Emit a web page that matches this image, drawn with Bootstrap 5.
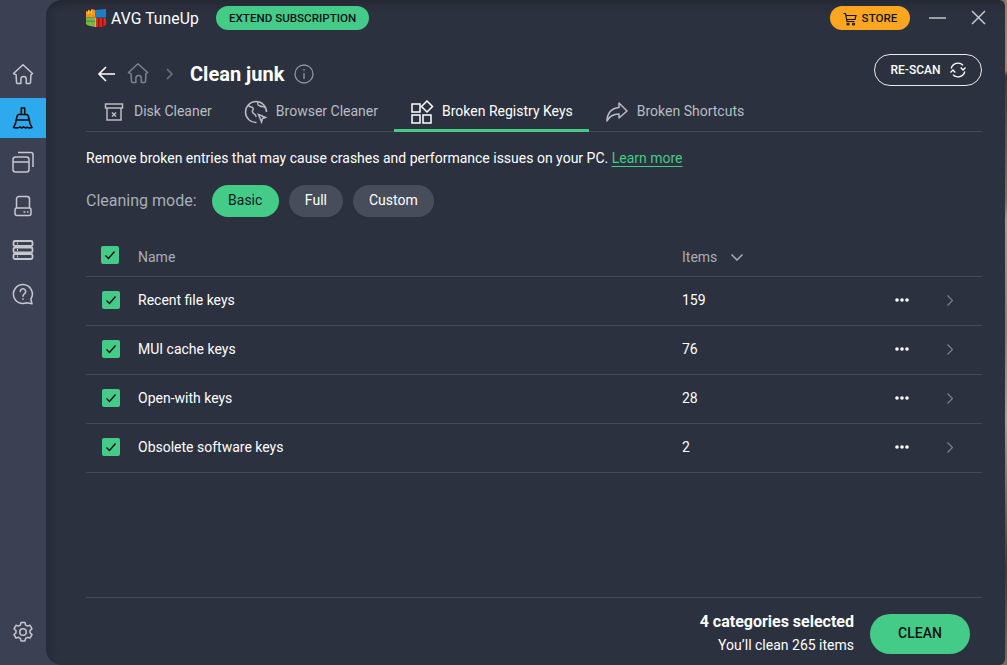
<!DOCTYPE html>
<html lang="en">
<head>
<meta charset="utf-8">
<title>AVG TuneUp</title>
<link href="https://cdn.jsdelivr.net/npm/bootstrap@5.3.0/dist/css/bootstrap.min.css" rel="stylesheet">
<style>
html,body{height:100%;margin:0;overflow:hidden}
body{background:#3b4152;font-family:Roboto,"Liberation Sans",sans-serif;color:#fff;font-size:14px}
.shell{width:1007px;height:665px;background:linear-gradient(90deg,#3b4152 0,#3b4152 1000px,#7b6a5e 1000px)}
.strip{width:2px;flex:none;background:linear-gradient(180deg,#9a7b6c 0,#a08272 70px,#3b3d34 76px,#6d7466 200px,#9aa08e 220px,#7d8474 330px,#a1a594 420px,#5a5f50 520px,#3a3c33 570px,#6f7060 665px)}
.rail{width:46px;flex:none;padding-top:54px}
.rail-btn{height:40px;width:46px;margin-bottom:4px;color:#c5c8cf}
.rail-btn svg{width:22px;height:22px}
.rail-btn.on{background:#2daaee;color:#0a0c12}
.rail-foot{margin-top:auto;margin-bottom:13px}
.panel{flex:1;min-width:0;height:665px;background:linear-gradient(180deg,#252a36 0,#2b313f 14px);border-radius:16px 6px 6px 16px;box-shadow:inset 7px 0 8px -6px rgba(18,22,30,.35);padding:0 23px 0 40px}
.topbar{height:35px;padding-top:6px}
.logo{width:20px;height:18px;margin:3px 5px 0 0}
.brand{font-size:15.7px;font-weight:400;letter-spacing:.1px;height:26px}
.pill-extend{height:24px;background:#44cb87;color:#0d1117;border-radius:12px;font-size:11.6px;font-weight:500;padding:1px 13px 0;margin-left:17px;border:0}
.pill-store{height:24px;width:80px;background:#fea61f;color:#12141a;border-radius:12px;font-size:11.6px;font-weight:500;border:0;gap:5px;padding:1px 0 0}
.win-group{gap:19px;margin-right:-6px}
.win{width:18px;height:18px;color:#c5c8cf}
.crumb{height:57px;padding-top:27px}
.crumb h1{font-size:20px;font-weight:700;margin:0;line-height:1;height:24px}
.ic-back{margin:3px 11px 0 11px}
.ic-home{margin:0 17px 0 0;color:#7d828e}
.ic-chev{margin:6px 16px 0 0}
.ic-info{margin:2px 0 0 10px}
.rescan{height:32px;width:108px;border:1px solid #e9eaee;border-radius:16px;background:transparent;color:#fff;font-size:12px;font-weight:500;gap:9px;padding:0 0 0 2px;margin-top:-8px}
.tabs{height:40px;border-bottom:1px solid #454a59}
.tab-i{height:40px;padding:2px 16px 0;color:#b9bcc4;font-size:14px;gap:8px;margin-bottom:-1px;border-bottom:3px solid transparent}
.tab-i svg{width:24px;height:24px}
.tab-i.on{color:#fff;border-bottom-color:#44cb87}
.intro{margin:18px 0 0;font-size:14px;line-height:16px}
.learn{color:#44cb87;text-decoration:underline;text-underline-offset:3px}
.mode{margin-top:19px;height:32px;gap:10px;color:#a9adb6;font-size:16px}
.mode-label{margin-right:5px}
.chip{height:32px;border-radius:16px;background:#484d5b;color:#fff;font-size:14px;border:0;padding:0 16px 2px}
.chip.on{background:#44cb87;color:#12161d;padding:0 16.5px 2px}
.grid-wrap{margin-top:20px}
.t-row{height:49px;border-bottom:1px solid #454a59;font-size:14px;padding-bottom:2px}
.t-head{height:40px;color:#a9adb6;padding-bottom:0}
.c-check{width:52px;padding-left:16px;flex:none}
.c-name{width:544px;flex:none}
.c-items{width:213px;flex:none}
.c-more{width:52px;flex:none;line-height:0}
.t-head .c-check{padding-left:15px;margin-bottom:3px}
.t-head .c-name,.t-head .c-items{padding-top:2px}
.tick{width:18px;height:18px;background:#44cb87;border-radius:2px}
.tick svg{width:12px;height:12px}
.ic-sort{margin-left:14px}
.spacer{flex:1}
.foot{height:68px;border-top:1px solid #454a59;padding:4px 12px 0 0;gap:16px}
.foot-text{text-align:right;line-height:24px;font-size:14px}
.foot-text b{font-size:16px;font-weight:700;display:block;margin-bottom:-1px}
.clean{width:100px;height:40px;border:0;border-radius:20px;background:#44cb87;color:#0d1117;font-size:14px;font-weight:500;padding:0}
</style>
</head>
<body>
<div class="shell d-flex">
  <nav class="rail d-flex flex-column">
    <div class="rail-btn d-flex align-items-center justify-content-center">
      <svg viewBox="0 0 22 22" fill="none" stroke="currentColor" stroke-width="1.5" stroke-linejoin="round"><path d="M1.5 10.5 11 1.8l9.5 8.7-1.600 1.400-.4 7.600a1 1 0 0 1-1 1h-3.200v-4.400a2.700 2.700 0 0 0-5.400 0v4.400H5.500a1 1 0 0 1-1-1l-.4-7.600z"/></svg>
    </div>
    <div class="rail-btn on d-flex align-items-center justify-content-center">
      <svg viewBox="0 0 22 22" fill="none" stroke="currentColor" stroke-width="1.6" stroke-linejoin="round"><path d="M9.300 1h3.400v6.500H9.300zM7 7.500h8c1 .6 1.500 1.500 1.700 3L18 16.500l2 4c-1.600.5-3.500.5-5-.4l-1 .8-2.500-.9-1.500.9-2-.9-1 .5c-1.800.5-3.800.5-5.500 0l2-4.100 1.300-6c.2-1.500.7-2.400 1.700-2.900z"/><path d="M4.800 13h12.400"/></svg>
    </div>
    <div class="rail-btn d-flex align-items-center justify-content-center">
      <svg viewBox="0 0 22 22" fill="none" stroke="currentColor" stroke-width="1.5" stroke-linejoin="round"><rect x="1" y="6" width="16" height="15" rx="2.500"/><path d="M1 11h16M6 1.500h13a2 2 0 0 1 2 2v12.500"/></svg>
    </div>
    <div class="rail-btn d-flex align-items-center justify-content-center">
      <svg viewBox="0 0 22 22" fill="none" stroke="currentColor" stroke-width="1.5" stroke-linejoin="round"><path d="M4.500 13V4a2.500 2.500 0 0 1 2.500-2.500h8A2.500 2.500 0 0 1 17.500 4v9"/><rect x="3" y="13" width="16" height="7.500" rx="2"/><path d="M11.500 17h2M15 17h1.500"/></svg>
    </div>
    <div class="rail-btn d-flex align-items-center justify-content-center">
      <svg viewBox="0 0 22 22" fill="none" stroke="currentColor" stroke-width="1.8"><rect x="1.500" y="2" width="19" height="5" rx="1.500"/><rect x="1.500" y="8.500" width="19" height="5" rx="1.500"/><rect x="1.500" y="15" width="19" height="5" rx="1.500"/><path d="M5 4.500h1M5 11h1M5 17.500h1"/></svg>
    </div>
    <div class="rail-btn d-flex align-items-center justify-content-center">
      <svg viewBox="0 0 22 22" fill="none" stroke="currentColor" stroke-width="1.5" stroke-linejoin="round"><path d="M11 1.500a9.500 9.500 0 1 0 3.500 18.300l5.500 1-1.200-4.600A9.500 9.500 0 0 0 11 1.500z"/><path d="M8.300 8.500a2.700 2.700 0 1 1 4.300 2.200c-1 .7-1.600 1.200-1.600 2.500" stroke-linecap="round"/><path d="M11 15.300v1.400"/></svg>
    </div>
    <div class="rail-foot rail-btn d-flex align-items-center justify-content-center">
      <svg viewBox="0 0 22 22" fill="none" stroke="currentColor" stroke-width="1.5" stroke-linejoin="round"><circle cx="11" cy="11" r="3.300"/><path d="M9 1.500h4l.6 2.600 1.900 1 2.500-.8 2 3.500-2 1.800v2.200l2 1.800-2 3.500-2.500-.8-1.900 1-.6 2.600H9l-.6-2.600-1.900-1-2.500.8-2-3.500 2-1.800V9.600l-2-1.800 2-3.500 2.500.8 1.900-1z"/></svg>
    </div>
  </nav>
  <main class="panel d-flex flex-column">
    <header class="topbar d-flex align-items-start">
      <svg class="logo" viewBox="0 0 20 18"><path fill="#f7941e" d="M0 1.500 1.500 3 3 .5 4.500 2.500 6 0l3 1v7.500H0z"/><path fill="#fbd024" d="M1.500 3 3 .5v4H1.500zM4.500 2.500 6 0v4.500H4.500z"/><path fill="#1e7fc4" d="M9 1l11-1v8.500H9z"/><path fill="#7ab648" d="M0 8.500h9V18l-7-1.500L0 15z"/><path fill="#4f9a3c" d="M0 11.500h9V13H0z"/><path fill="#e0271f" d="M10 9h10v7l-4 2h-6z"/><path fill="#8e1512" d="M12 9h1.500v9H12zM16 9h1.500v8.500H16z"/><path fill="#f0b429" d="M9 8.500h1V18H9z"/></svg>
      <span class="brand d-flex align-items-center">AVG TuneUp</span>
      <button class="pill-extend d-flex align-items-center">EXTEND SUBSCRIPTION</button>
      <div class="win-group ms-auto d-flex align-items-center">
        <button class="pill-store d-flex align-items-center justify-content-center">
          <svg width="14" height="14" viewBox="0 0 14 14" fill="none" stroke="currentColor" stroke-width="1.200"><path d="M.5 1.500h2l1.500 8h7.500M3 3.500h10l-1 4H3.800"/><circle cx="5" cy="12" r="1"/><circle cx="10.500" cy="12" r="1"/></svg>STORE</button>
        <svg class="win" viewBox="0 0 18 18" fill="none" stroke="currentColor" stroke-width="1.500"><path d="M0 9h17"/></svg>
        <svg class="win ms-1" viewBox="0 0 18 18" fill="none" stroke="currentColor" stroke-width="1.500"><path d="M2 2l13 13M15 2 2 15"/></svg>
      </div>
    </header>
    <section class="crumb d-flex align-items-start">
      <svg class="ic-back" width="19" height="18" viewBox="0 0 19 18" fill="none" stroke="#fff" stroke-width="1.600"><path d="M18 9H2M9 2 2 9l7 7"/></svg>
      <svg class="ic-home" width="22" height="22" viewBox="0 0 22 22" fill="none" stroke="currentColor" stroke-width="1.500" stroke-linejoin="round"><path d="M1.500 10.500 11 1.800l9.500 8.700-1.600 1.400-.4 7.600a1 1 0 0 1-1 1h-3.200v-4.400a2.700 2.700 0 0 0-5.400 0v4.400H5.500a1 1 0 0 1-1-1l-.4-7.600z"/></svg>
      <svg class="ic-chev" width="8" height="12" viewBox="0 0 8 12" fill="none" stroke="#6f7480" stroke-width="1.500"><path d="M1 1l5 5-5 5"/></svg>
      <h1 class="d-flex align-items-center">Clean junk</h1>
      <svg class="ic-info" width="20" height="20" viewBox="0 0 20 20" fill="none" stroke="#8f94a0" stroke-width="1.300"><circle cx="10" cy="10" r="9"/><path d="M10 9v6M10 5v1.800"/></svg>
      <button class="rescan ms-auto d-flex align-items-center justify-content-center">RE-SCAN
        <svg width="18" height="18" viewBox="0 0 18 18" fill="none" stroke="currentColor" stroke-width="1.300"><path d="M2.200 7.500A7 7 0 0 1 14 4.200M15.800 10.500A7 7 0 0 1 4 13.800"/><path d="M16.500 6.500 14 9 11.700 6.500M1.500 11.500 4 9l2.300 2.500"/></svg></button>
    </section>
    <div class="tabs d-flex">
      <div class="tab-i d-flex align-items-center">
        <svg viewBox="0 0 24 24" fill="none" stroke="currentColor" stroke-width="1.500"><path d="M3.500 4h17v4h-17zM5 8v12h14V8"/><path d="M10 12.500l4 4M14 12.500l-4 4"/></svg>Disk Cleaner</div>
      <div class="tab-i d-flex align-items-center">
        <svg viewBox="0 0 24 24" fill="none" stroke="currentColor" stroke-width="1.500"><path d="M12.500 22.500A10.500 10.500 0 1 1 22.500 12"/><path d="M4 5c2 3 4 1 5 3s-2 3 0 5 3 1 3 4M14 2c-1 3 0 3 2 4s4 0 5 2"/><path d="M14.500 14.500l7 3-3 1-1 3.500z"/></svg>Browser Cleaner</div>
      <div class="tab-i on d-flex align-items-center">
        <svg viewBox="0 0 24 24" fill="none" stroke="currentColor" stroke-width="1.500"><rect x="2" y="4" width="8" height="8"/><rect x="2" y="15" width="8" height="8"/><rect x="13" y="15" width="8" height="8"/><path d="M17 1l5.500 5.500L17 12l-5.500-5.500z"/></svg>Broken Registry Keys</div>
      <div class="tab-i d-flex align-items-center">
        <svg viewBox="0 0 24 24" fill="none" stroke="currentColor" stroke-width="1.500" stroke-linejoin="round"><path d="M14 3l8 8-8 7v-4C8 14 4.500 16 2 21c0-7 4-13 12-13.500z"/></svg>Broken Shortcuts</div>
    </div>
    <p class="intro">Remove broken entries that may cause crashes and performance issues on your PC. <a href="#" class="learn">Learn more</a></p>
    <div class="mode d-flex align-items-center">
      <span class="mode-label">Cleaning mode:</span>
      <button class="chip on">Basic</button>
      <button class="chip">Full</button>
      <button class="chip">Custom</button>
    </div>
    <div class="grid-wrap">
      <div class="t-row t-head d-flex align-items-center">
        <div class="c-check"><div class="tick d-flex align-items-center justify-content-center"><svg viewBox="0 0 12 12" fill="none" stroke="#0d1117" stroke-width="1.400"><path d="M1.500 6.500l3 3 6-7"/></svg></div></div>
        <div class="c-name">Name</div>
        <div class="c-items d-flex align-items-center">Items<svg class="ic-sort" width="12" height="7" viewBox="0 0 12 7" fill="none" stroke="currentColor" stroke-width="1.500"><path d="M.5.500 6 6 11.500.500"/></svg></div>
      </div>
      <div class="t-row d-flex align-items-center">
        <div class="c-check"><div class="tick d-flex align-items-center justify-content-center"><svg viewBox="0 0 12 12" fill="none" stroke="#0d1117" stroke-width="1.400"><path d="M1.500 6.500l3 3 6-7"/></svg></div></div>
        <div class="c-name">Recent file keys</div>
        <div class="c-items">159</div>
        <div class="c-more"><svg width="14" height="4" viewBox="0 0 14 4" fill="#fff"><circle cx="2" cy="2" r="1.800"/><circle cx="7" cy="2" r="1.800"/><circle cx="12" cy="2" r="1.800"/></svg></div>
        <svg width="6" height="11" viewBox="0 0 6 11" fill="none" stroke="#7d828e" stroke-width="1.200"><path d="M.5.500l5 5-5 5"/></svg>
      </div>
      <div class="t-row d-flex align-items-center">
        <div class="c-check"><div class="tick d-flex align-items-center justify-content-center"><svg viewBox="0 0 12 12" fill="none" stroke="#0d1117" stroke-width="1.400"><path d="M1.500 6.500l3 3 6-7"/></svg></div></div>
        <div class="c-name">MUI cache keys</div>
        <div class="c-items">76</div>
        <div class="c-more"><svg width="14" height="4" viewBox="0 0 14 4" fill="#fff"><circle cx="2" cy="2" r="1.800"/><circle cx="7" cy="2" r="1.800"/><circle cx="12" cy="2" r="1.800"/></svg></div>
        <svg width="6" height="11" viewBox="0 0 6 11" fill="none" stroke="#7d828e" stroke-width="1.200"><path d="M.5.500l5 5-5 5"/></svg>
      </div>
      <div class="t-row d-flex align-items-center">
        <div class="c-check"><div class="tick d-flex align-items-center justify-content-center"><svg viewBox="0 0 12 12" fill="none" stroke="#0d1117" stroke-width="1.400"><path d="M1.500 6.500l3 3 6-7"/></svg></div></div>
        <div class="c-name">Open-with keys</div>
        <div class="c-items">28</div>
        <div class="c-more"><svg width="14" height="4" viewBox="0 0 14 4" fill="#fff"><circle cx="2" cy="2" r="1.800"/><circle cx="7" cy="2" r="1.800"/><circle cx="12" cy="2" r="1.800"/></svg></div>
        <svg width="6" height="11" viewBox="0 0 6 11" fill="none" stroke="#7d828e" stroke-width="1.200"><path d="M.5.500l5 5-5 5"/></svg>
      </div>
      <div class="t-row d-flex align-items-center">
        <div class="c-check"><div class="tick d-flex align-items-center justify-content-center"><svg viewBox="0 0 12 12" fill="none" stroke="#0d1117" stroke-width="1.400"><path d="M1.500 6.500l3 3 6-7"/></svg></div></div>
        <div class="c-name">Obsolete software keys</div>
        <div class="c-items">2</div>
        <div class="c-more"><svg width="14" height="4" viewBox="0 0 14 4" fill="#fff"><circle cx="2" cy="2" r="1.800"/><circle cx="7" cy="2" r="1.800"/><circle cx="12" cy="2" r="1.800"/></svg></div>
        <svg width="6" height="11" viewBox="0 0 6 11" fill="none" stroke="#7d828e" stroke-width="1.200"><path d="M.5.500l5 5-5 5"/></svg>
      </div>
    </div>
    <div class="spacer"></div>
    <footer class="foot d-flex align-items-center justify-content-end">
      <div class="foot-text"><b>4 categories selected</b>You’ll clean 265 items</div>
      <button class="clean">CLEAN</button>
    </footer>
  </main>
  <div class="strip"></div>
</div>
</body>
</html>
